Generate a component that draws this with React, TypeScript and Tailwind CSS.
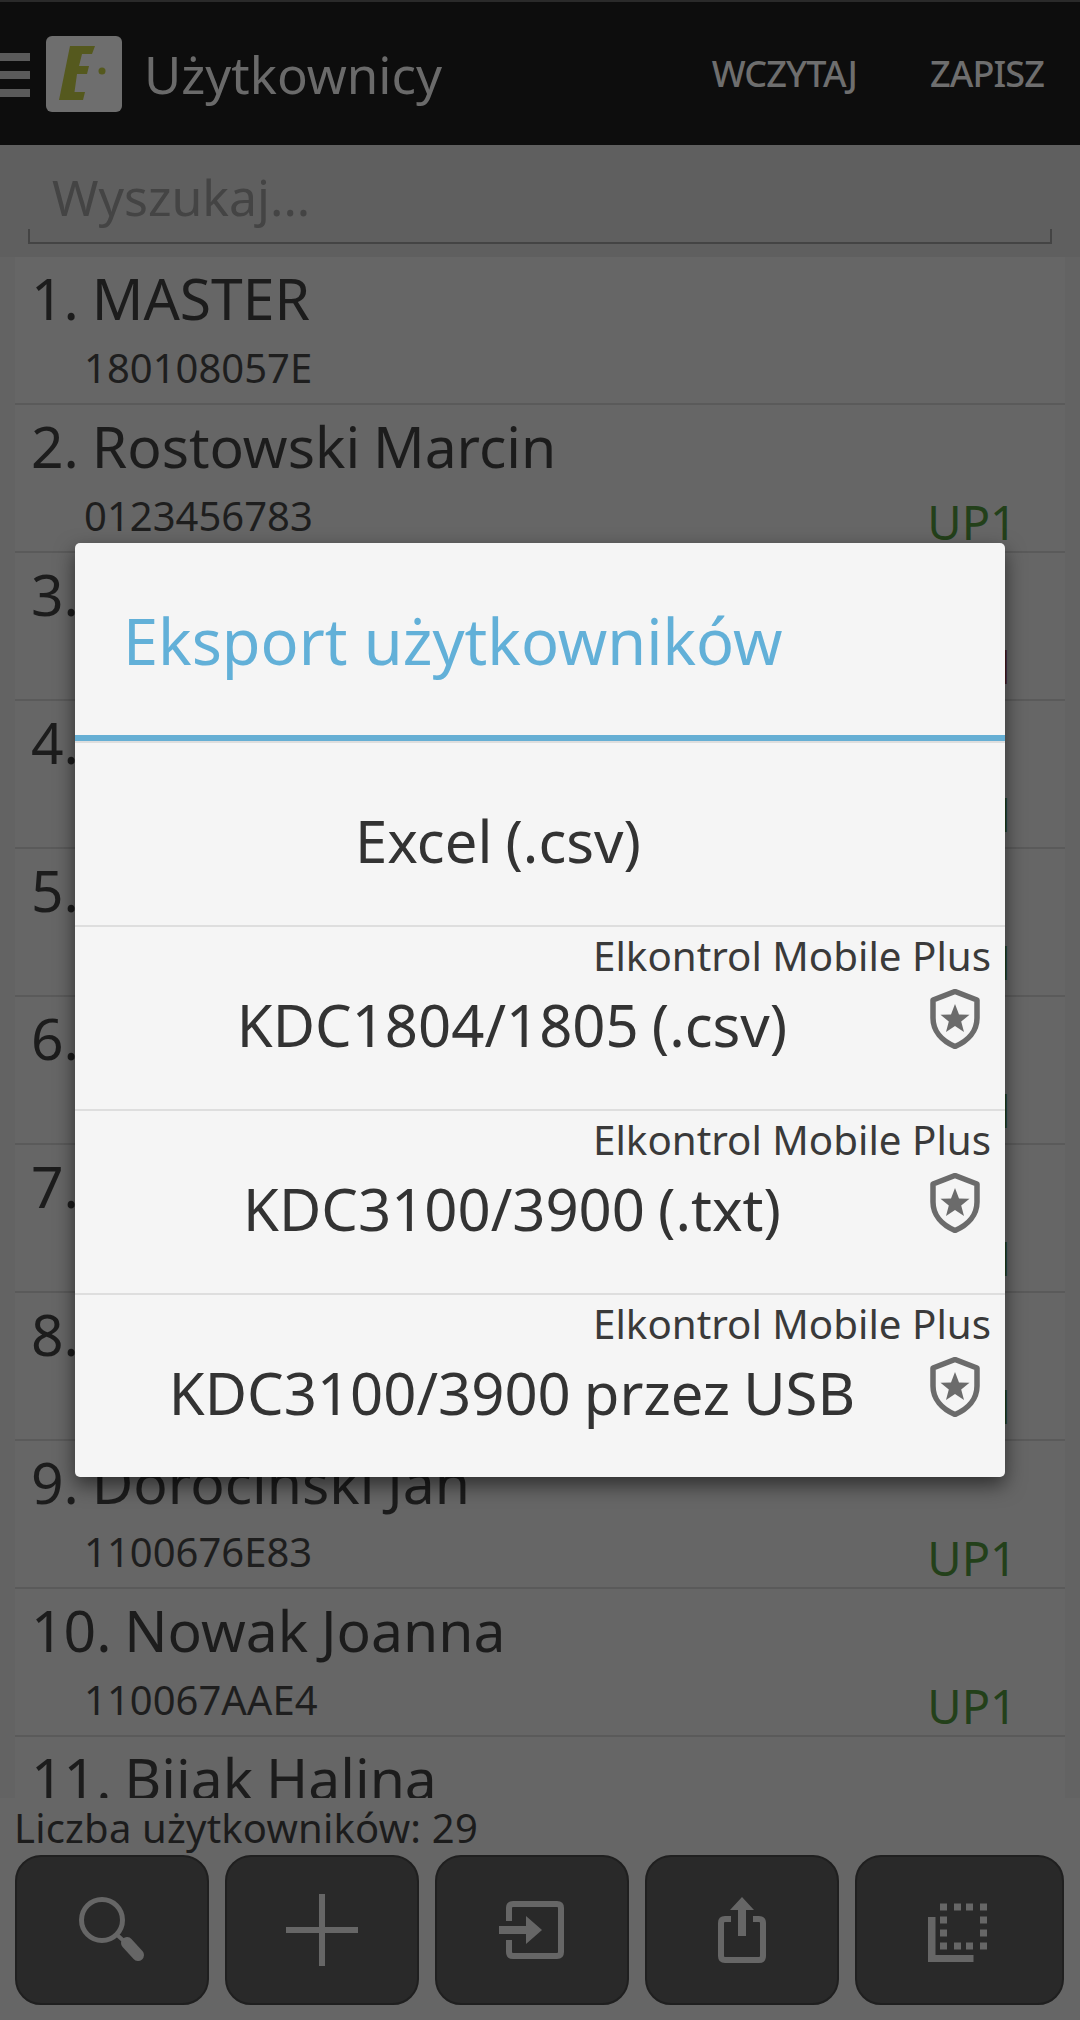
const FONT = "font-['Noto_Sans',sans-serif]";

function Shield() {
  return (
    <svg width="50" height="60" viewBox="0 0 50 60" className="absolute right-[25px] top-[62px]">
      <path d="M25 2.5 L47 11 V29 C47 42 38 52 25 57.5 C12 52 3 42 3 29 V11 Z" fill="none" stroke="#6b6b6b" strokeWidth="5.5" strokeLinejoin="round" />
      <path d="M25 15 L29 25.5 L39.5 25.8 L31.2 32.5 L34 43 L25 37 L16 43 L18.8 32.5 L10.5 25.8 L21 25.5 Z" fill="#6b6b6b" />
    </svg>
  );
}

function DialogRow({ label, plus, pl }: { label: string; plus?: boolean; pl: string }) {
  return (
    <div className={`relative h-[184px] flex items-center justify-center pt-[13px] ${pl} border-t-2 border-[#dedede] first:border-t-0`}>
      {plus && (
        <>
          <div className="absolute right-[14px] top-[6px] text-[40.3px] leading-[46px] text-[#3a3a3a]">Elkontrol Mobile Plus</div>
          <Shield />
        </>
      )}
      <span className="text-[58px] leading-[60px] text-[#333] [word-spacing:-2px]">{label}</span>
    </div>
  );
}

const rows = [
  { n: "1. MASTER", id: "180108057E" },
  { n: "2. Rostowski Marcin", id: "0123456783", up: "UP1" },
  { n: "3.", up: "UP1", red: true },
  { n: "4.", up: "UP1" },
  { n: "5.", up: "UP1" },
  { n: "6.", up: "UP1" },
  { n: "7.", up: "UP1" },
  { n: "8.", up: "UP1" },
  { n: "9. Dorociński Jan", id: "1100676E83", up: "UP1" },
  { n: "10. Nowak Joanna", id: "110067AAE4", up: "UP1" },
  { n: "11. Bijak Halina" },
];

function ListRow({ r }: { r: { n: string; id?: string; up?: string; red?: boolean } }) {
  return (
    <div className="relative h-[148px] shrink-0 border-b-2 border-[#5a5a5a] pl-4 pr-4 pt-[8px]">
      <div className="text-[57px] leading-[66px] text-[#1c1c1c] [word-spacing:-2px]">{r.n}</div>
      <div className="flex justify-between items-end pl-[53px] pr-[38px] pt-[13px]">
        <span className="text-[40px] leading-[48px] mb-[8px] text-[#1e1e1e]">{r.id}</span>
        {r.up && (
          <span className={`text-[47px] leading-[52px] mr-[-6px] ${r.red ? "text-[#4a1c1c]" : "text-[#23401a]"}`}>{r.up}</span>
        )}
      </div>
    </div>
  );
}

function BarButton({ children, wide }: { children: React.ReactNode; wide?: boolean }) {
  return (
    <div className={`${wide ? "w-[209px]" : "w-[194px]"} h-[150px] rounded-[26px] bg-[#292929] border-2 border-[#1f1f1f] flex items-center justify-center`}>
      {children}
    </div>
  );
}

export default function App() {
  return (
    <div className={`relative w-[1080px] h-[2020px] overflow-hidden bg-[#636363] flex flex-col ${FONT}`}>
      <header className="h-[145px] shrink-0 bg-[#0d0d0d] border-t-2 border-[#2a2a2a] flex items-center">
        <div className="w-[30px] flex flex-col gap-[10px] mt-[2px]">
          <div className="h-[8px] bg-[#5a5a5a]" />
          <div className="h-[8px] bg-[#5a5a5a]" />
          <div className="h-[8px] bg-[#5a5a5a]" />
        </div>
        <div className="ml-[16px] w-[76px] h-[76px] rounded-[6px] bg-[#6e6e6e] flex items-center justify-center">
          <svg width="60" height="60" viewBox="0 0 60 60">
            <path d="M16 2 H41 L38 10 H28 L25 22 H35 L33 30 H23 L20.5 48 H31 L29 56 H5 Z" fill="#55591e" />
            <circle cx="48" cy="27" r="3.5" fill="#55591e" />
          </svg>
        </div>
        <div className="ml-[22px] text-[51px] leading-[60px] text-[#6a6a6a]">Użytkownicy</div>
        <div className="ml-auto text-[36px] font-medium text-[#6e6e6e] tracking-tight mr-[73px]">WCZYTAJ</div>
        <div className="text-[36px] font-medium text-[#6e6e6e] tracking-tight mr-[36px]">ZAPISZ</div>
      </header>

      <div className="h-[112px] shrink-0 bg-[#5f5f5f] px-[28px] pt-[8px]">
        <div className="h-[91px] pt-[5px] border-x-2 border-b-2 border-[#444] px-[22px] text-[50px] leading-[78px] text-[#444] [border-image:linear-gradient(to_bottom,transparent_85%,#444_85%)_1]">
          Wyszukaj...
        </div>
      </div>

      <div className="flex-1 min-h-0 overflow-hidden mx-[15px] flex flex-col bg-[#666666]">
        {rows.map((r) => (
          <ListRow key={r.n} r={r} />
        ))}
      </div>

      <div className="h-[222px] shrink-0 bg-[#666666] flex flex-col">
        <div className="pl-[14px] text-[40px] leading-[46px] mt-[7px] text-[#1c1c1c] tracking-[0.2px]">Liczba użytkowników: 29</div>
        <div className="mt-[4px] px-[15px] flex gap-[16px]">
          <BarButton>
            <svg width="66" height="66" viewBox="0 0 66 66" fill="none">
              <circle cx="23" cy="23" r="20.5" stroke="#666" strokeWidth="5" />
              <path d="M37 37 L46 45" stroke="#666" strokeWidth="4" />
              <path d="M48 46 L59 58" stroke="#666" strokeWidth="12" strokeLinecap="round" />
            </svg>
          </BarButton>
          <BarButton>
            <svg width="72" height="72" viewBox="0 0 72 72">
              <rect x="0" y="33" width="72" height="6" fill="#666" />
              <rect x="33" y="0" width="6" height="72" fill="#666" />
            </svg>
          </BarButton>
          <BarButton>
            <svg width="66" height="58" viewBox="0 0 66 58" fill="none">
              <path d="M10 20 V7 Q10 3 14 3 H58 Q62 3 62 7 V51 Q62 55 58 55 H14 Q10 55 10 51 V39" stroke="#666" strokeWidth="6" />
              <path d="M0 25 H27 V15 L43 29 L27 43 V33 H0 Z" fill="#666" />
            </svg>
          </BarButton>
          <BarButton>
            <svg width="48" height="66" viewBox="0 0 48 66" fill="none">
              <path d="M13 22 H7 Q3 22 3 26 V59 Q3 63 7 63 H41 Q45 63 45 59 V26 Q45 22 41 22 H35" stroke="#666" strokeWidth="6" />
              <path d="M24 0 L36 13 H28 V39 H20 V13 H12 Z" fill="#666" />
            </svg>
          </BarButton>
          <BarButton wide>
            <svg width="66" height="66" viewBox="0 0 66 66" fill="#666">
              <rect x="13" y="6.5" width="7" height="7" />
              <rect x="27" y="6.5" width="7" height="7" />
              <rect x="39" y="6.5" width="7" height="7" />
              <rect x="53" y="6.5" width="7" height="7" />
              <rect x="13" y="19.5" width="7" height="7" />
              <rect x="53" y="19.5" width="7" height="7" />
              <rect x="13" y="32.5" width="7" height="7" />
              <rect x="53" y="32.5" width="7" height="7" />
              <rect x="13" y="45.5" width="7" height="7" />
              <rect x="27" y="45.5" width="7" height="7" />
              <rect x="39" y="45.5" width="7" height="7" />
              <rect x="53" y="45.5" width="7" height="7" />
              <path d="M1 20 H8.5 V58 H46.5 V65 H1 Z" />
            </svg>
          </BarButton>
        </div>
      </div>

      <div className="absolute left-[75px] top-[543px] w-[930px] h-[934px] rounded-[5px] bg-[#f5f5f5] shadow-[0_8px_20px_rgba(0,0,0,0.55)] flex flex-col">
        <div className="h-[192px] shrink-0 pl-[48px] pt-[53px] text-[63px] leading-[90px] text-[#62b0d8]">Eksport użytkowników</div>
        <div className="h-[6px] shrink-0 bg-[#66afd4]" />
        <DialogRow label="Excel (.csv)" pl="pr-[84px]" />
        <DialogRow label="KDC1804/1805 (.csv)" plus pl="pr-[56px]" />
        <DialogRow label="KDC3100/3900 (.txt)" plus pl="pr-[56px]" />
        <DialogRow label="KDC3100/3900 przez USB" plus pl="pr-[56px]" />
      </div>
    </div>
  );
}
